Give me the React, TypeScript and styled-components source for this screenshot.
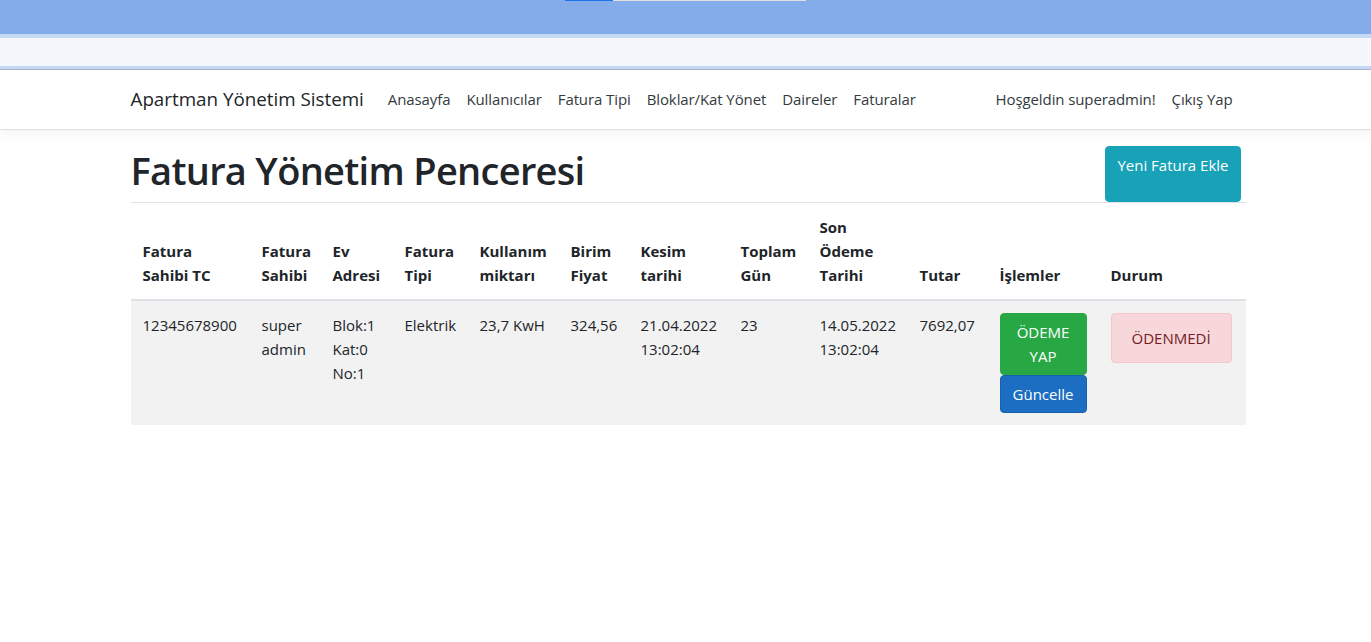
import * as React from 'react'
import styled, { createGlobalStyle } from 'styled-components'

const GlobalStyle = createGlobalStyle`
  body {
    margin: 0;
    font-family: "Open Sans", "Noto Sans", sans-serif;
    font-size: 16px;
    line-height: 1.5;
    color: #212529;
    background: #fff;
  }
  * { box-sizing: border-box; }
`

const Chrome = styled.div`
  height: 34px;
  background: #85acea;
  display: flex;
  justify-content: center;
  align-items: flex-start;
`

const Progress = styled.div`
  width: 241px;
  height: 1px;
  background: #e0e0e0;
  display: flex;
`

const ProgressFill = styled.div`
  width: 48px;
  background: #1a73e8;
`

const Strip = styled.div<{ $h: number; $bg: string }>`
  height: ${(p) => p.$h}px;
  background: ${(p) => p.$bg};
`

const Navbar = styled.nav`
  height: 60px;
  border-bottom: 1px solid #dedede;
  box-shadow: 0 4px 12px rgba(0, 0, 0, 0.05);
  margin-bottom: 16px;
  display: flex;
  align-items: center;
`

const Container = styled.div`
  width: 1140px;
  padding: 0 15px;
  margin: 0 auto;
`

const NavInner = styled(Container)`
  display: flex;
  align-items: center;
`

const Brand = styled.a`
  font-size: 18.8px;
  color: #212529;
  margin-right: 16px;
  white-space: nowrap;
`

const NavList = styled.div`
  display: flex;
  flex: 1;
`

const NavLink = styled.a`
  font-size: 15px;
  letter-spacing: -0.1px;
  color: #343a40;
  padding: 0 8px;
  white-space: nowrap;
`

const NavRight = styled.div`
  display: flex;
`

const HeadRow = styled.div`
  display: flex;
  justify-content: space-between;
`

const Title = styled.h1`
  margin: 0 0 8px;
  font-size: 38px;
  font-weight: 600;
  line-height: 48px;
  letter-spacing: -0.7px;
`

const Button = styled.button<{ $bg: string; $border: string }>`
  font-family: inherit;
  font-size: 15px;
  line-height: 24px;
  color: #fff;
  background: ${(p) => p.$bg};
  border: 1px solid ${(p) => p.$border};
  border-radius: 4px;
  padding: 6px 12px;
  text-align: center;
`

const AddButton = styled(Button)`
  align-self: stretch;
  display: flex;
  align-items: flex-start;
  padding: 6px 11px;
`

const Table = styled.table`
  width: 100%;
  border-collapse: collapse;
  table-layout: fixed;
`

const Th = styled.th`
  text-align: left;
  vertical-align: bottom;
  padding: 12px;
  font-size: 15px;
  font-weight: 700;
  line-height: 24px;
  border-top: 1px solid #dee2e6;
  border-bottom: 2px solid #dee2e6;
`

const Row = styled.tr`
  background: #f2f2f2;
`

const Td = styled.td`
  vertical-align: top;
  padding: 12px;
  font-size: 15px;
  line-height: 24px;
`

const BlockButton = styled(Button)`
  display: block;
  width: 100%;
`

const Status = styled.div`
  display: inline-block;
  padding: 12px 20px;
  font-size: 15px;
  line-height: 24px;
  color: #721c24;
  background: #f8d7da;
  border: 1px solid #f5c6cb;
  border-radius: 4px;
`

const cols = [119, 71, 72, 75, 91, 70, 100, 79, 100, 80, 111, 147]

const headers = [
  ['Fatura', 'Sahibi TC'],
  ['Fatura', 'Sahibi'],
  ['Ev', 'Adresi'],
  ['Fatura', 'Tipi'],
  ['Kullanım', 'miktarı'],
  ['Birim', 'Fiyat'],
  ['Kesim', 'tarihi'],
  ['Toplam', 'Gün'],
  ['Son', 'Ödeme', 'Tarihi'],
  ['Tutar'],
  ['İşlemler'],
  ['Durum'],
]

const cells = [
  ['12345678900'],
  ['super', 'admin'],
  ['Blok:1', 'Kat:0', 'No:1'],
  ['Elektrik'],
  ['23,7 KwH'],
  ['324,56'],
  ['21.04.2022', '13:02:04'],
  ['23'],
  ['14.05.2022', '13:02:04'],
  ['7692,07'],
]

const lines = (parts: string[]) =>
  parts.map((p, i) => (
    <React.Fragment key={i}>
      {i > 0 && <br />}
      {p}
    </React.Fragment>
  ))

export default function App() {
  return (
    <>
      <GlobalStyle />
      <Chrome>
        <Progress>
          <ProgressFill />
        </Progress>
      </Chrome>
      <Strip $h={4} $bg="#c6d9f5" />
      <Strip $h={28} $bg="#f4f7fb" />
      <Strip $h={3} $bg="#c6d9f5" />
      <Strip $h={1} $bg="#a9b6cb" />

      <Navbar>
        <NavInner>
          <Brand>Apartman Yönetim Sistemi</Brand>
          <NavList>
            {['Anasayfa', 'Kullanıcılar', 'Fatura Tipi', 'Bloklar/Kat Yönet', 'Daireler', 'Faturalar'].map((n) => (
              <NavLink key={n}>{n}</NavLink>
            ))}
          </NavList>
          <NavRight>
            <NavLink>Hoşgeldin superadmin!</NavLink>
            <NavLink>Çıkış Yap</NavLink>
          </NavRight>
        </NavInner>
      </Navbar>

      <Container>
        <HeadRow>
          <Title>Fatura Yönetim Penceresi</Title>
          <AddButton $bg="#17a2b8" $border="#17a2b8">Yeni Fatura Ekle</AddButton>
        </HeadRow>

        <Table>
          <colgroup>
            {cols.map((w, i) => (
              <col key={i} style={{ width: w }} />
            ))}
          </colgroup>
          <thead>
            <tr>
              {headers.map((h, i) => (
                <Th key={i}>{lines(h)}</Th>
              ))}
            </tr>
          </thead>
          <tbody>
            <Row>
              {cells.map((c, i) => (
                <Td key={i}>{lines(c)}</Td>
              ))}
              <Td>
                <BlockButton $bg="#28a745" $border="#28a745">ÖDEME YAP</BlockButton>
                <BlockButton $bg="#1b6ec2" $border="#1861ac">Güncelle</BlockButton>
              </Td>
              <Td>
                <Status>ÖDENMEDİ</Status>
              </Td>
            </Row>
          </tbody>
        </Table>
      </Container>
    </>
  )
}
